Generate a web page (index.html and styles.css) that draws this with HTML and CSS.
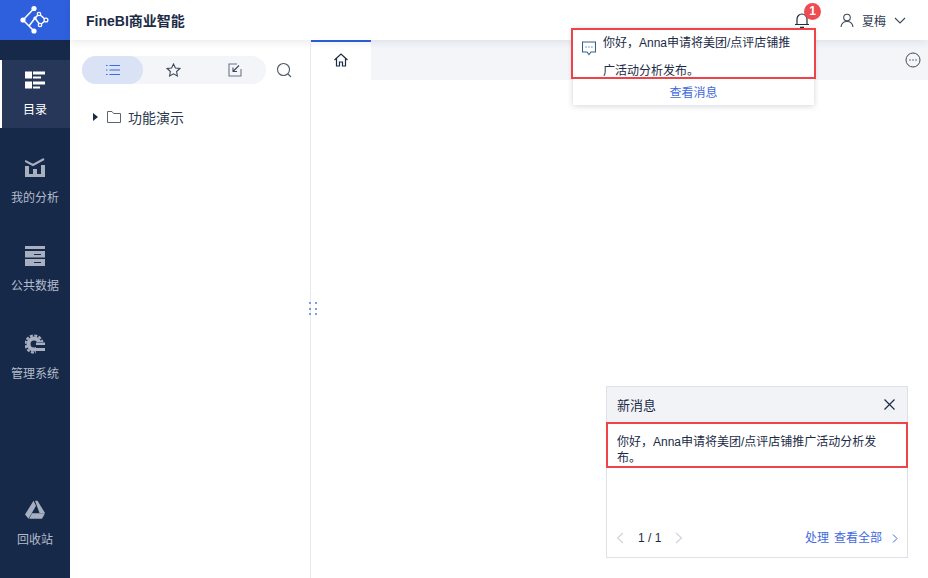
FILE: index.html
```html
<!DOCTYPE html>
<html lang="zh-CN">

<head>
    <meta charset="UTF-8">
    <title>FineBI商业智能</title>
    <link rel="stylesheet" href="styles.css">
</head>

<body>
    <div class="app">
        <!-- 左侧导航 -->
        <aside class="sidebar">
            <div class="logo">
                <svg width="30" height="30" viewBox="0 0 30 30" fill="none" stroke="#fff" stroke-width="1.500">
                    <path d="M14 3.500L3 15L14 26M9 21L15 13L20 20L26 15L19 9L15 13"/>
                    <g fill="#fff" stroke="none">
                        <circle cx="14" cy="3.500" r="2.600"/>
                        <circle cx="3" cy="15" r="2.600"/>
                        <circle cx="14" cy="26" r="2.600"/>
                        <circle cx="15" cy="13" r="1.600"/>
                    </g>
                    <g fill="#2e60de" stroke-width="1.300">
                        <circle cx="26" cy="15" r="1.900"/>
                        <circle cx="19" cy="9" r="1.700"/>
                        <circle cx="20" cy="20" r="1.700"/>
                    </g>
                </svg>
            </div>
            <nav class="nav">
                <a class="nav-item active">
                    <svg width="20" height="20" viewBox="0 0 20 20" fill="#fff">
                        <path d="M0 1.500h7v7H0zM8 1.500h12v3H8zM8 6.500h8v2H8zM0 11.500h7v7H0zM8 11.500h12v3H8zM8 16.500h7v2H8z"/>
                    </svg>
                    <span>目录</span>
                </a>
                <a class="nav-item">
                    <svg width="20" height="20" viewBox="0 0 20 20" fill="#a7afc0">
                        <path d="M0 16h20v3H0zM0 8h4v8H0zM8 11h4v5H8zM16 7h4v9h-4z"/>
                        <path d="M0 3l8 4 11-6" fill="none" stroke="#a7afc0" stroke-width="2"/>
                    </svg>
                    <span>我的分析</span>
                </a>
                <a class="nav-item">
                    <svg width="20" height="20" viewBox="0 0 20 20" fill="#a7afc0">
                        <path d="M0 0h20v3H0zM0 5h20v6.500H0zM0 13h20v7H0z"/>
                        <path d="M9 8h7v1H9zM9 16h7v1H9z" fill="#162949"/>
                    </svg>
                    <span>公共数据</span>
                </a>
                <a class="nav-item">
                    <svg width="20" height="20" viewBox="0 0 20 20" fill="none">
                        <circle cx="9" cy="10" r="5.500" stroke="#a7afc0" stroke-width="4"/>
                        <circle cx="9" cy="10" r="8.500" stroke="#a7afc0" stroke-width="2.200" stroke-dasharray="3 1.450"/>
                        <path d="M11 8h9v12h-9z" fill="#162949"/>
                        <path d="M11 8.500h9v2.500h-9zM11 14h9v3h-9z" fill="#a7afc0"/>
                    </svg>
                    <span>管理系统</span>
                </a>
            </nav>
            <a class="nav-item recycle">
                <svg width="20" height="20" viewBox="0 0 20 20" fill="#a7afc0">
                    <path d="M8.500 .800L0 14.500 3.500 18.800 11 5.800zM10 .800h2.500L20 13h-5.500zM7 13.300h13l-3 5.500H4.200z"/>
                </svg>
                <span>回收站</span>
            </a>
        </aside>

        <div class="main">
            <header class="topbar">
                <h1 class="brand">FineBI商业智能</h1>
                <div class="top-right">
                    <div class="bell">
                        <svg width="14" height="15" viewBox="0 0 14 15" fill="none" stroke="#1f2d3d" stroke-width="1.200">
                            <path d="M0 11.500h14M2 11.500V6a5 5 0 0 1 10 0v5.500M5 14.400h4"/>
                        </svg>
                        <span class="badge">1</span>
                    </div>
                    <div class="user">
                        <svg width="14" height="15" viewBox="0 0 14 15" fill="none" stroke="#3d4a5c" stroke-width="1.100">
                            <circle cx="7" cy="4.500" r="3.300"/>
                            <path d="M1 14c.5-3.500 3-5.500 6-5.500s5.500 2 6 5.500"/>
                        </svg>
                        <span>夏梅</span>
                        <svg width="12" height="7" viewBox="0 0 12 7" fill="none" stroke="#3d4a5c" stroke-width="1.100">
                            <path d="M1 1l5 5 5-5"/>
                        </svg>
                    </div>
                </div>
            </header>

            <div class="content">
                <section class="catalog">
                    <div class="catalog-tools">
                        <div class="tabs">
                            <button class="tab on">
                                <svg width="14" height="12" viewBox="0 0 14 12" fill="none" stroke="#3f69dc" stroke-width="1">
                                    <path d="M3.500 1.500H14M3.500 6H14M3.500 10.500H14M0 1.500h1.500M0 6h1.500M0 10.500h1.500"/>
                                </svg>
                            </button>
                            <button class="tab">
                                <svg width="15" height="14" viewBox="0 0 15 14" fill="none" stroke="#3d4a5c" stroke-width="1.100">
                                    <path d="M7.500 1l1.900 4 4.400.5-3.200 3 .8 4.400-3.900-2.100-3.900 2.100.8-4.400-3.200-3L5.600 5z"/>
                                </svg>
                            </button>
                            <button class="tab">
                                <svg width="14" height="14" viewBox="0 0 14 14" fill="none" stroke="#6b7687" stroke-width="1.100">
                                    <path d="M13 6v7H1V1h8"/>
                                    <path d="M11 2.500L5.500 8M5 4.500V8.500h4" stroke="#3d4a5c"/>
                                </svg>
                            </button>
                        </div>
                        <svg class="search" width="16" height="16" viewBox="0 0 16 16" fill="none" stroke="#4a5768" stroke-width="1.100">
                            <circle cx="7.500" cy="7.500" r="6"/>
                            <path d="M12 12l3 3"/>
                        </svg>
                    </div>
                    <div class="tree-row">
                        <i class="arrow"></i>
                        <svg width="14" height="12" viewBox="0 0 14 12" fill="none" stroke="#5a6576" stroke-width="1">
                            <path d="M.500 11.500V.500h4.500l1.500 2h7v9z"/>
                        </svg>
                        <span>功能演示</span>
                    </div>
                    <div class="drag"><i></i><i></i><i></i></div>
                </section>

                <section class="board">
                    <div class="tabbar">
                        <div class="home-tab">
                            <svg width="14" height="14" viewBox="0 0 14 14" fill="none" stroke="#1c2b45" stroke-width="1.200">
                                <path d="M.500 7L7 1l6.500 6M2.500 5.500V13h3V9h3v4h3V5.500"/>
                            </svg>
                        </div>
                        <svg class="more" width="16" height="16" viewBox="0 0 16 16" fill="none" stroke="#3d4a5c">
                            <circle cx="8" cy="8" r="7"/>
                            <path d="M4.500 8h1M7.500 8h1M10.500 8h1" stroke-width="1.400"/>
                        </svg>
                    </div>
                </section>
            </div>
        </div>
    </div>

    <!-- 消息下拉 -->
    <div class="drop">
        <div class="drop-msg">
            <svg width="14" height="15" viewBox="0 0 14 15" fill="none" stroke="#35618a" stroke-width="1.100">
                <path d="M.500 1h13v10H9l-2 2.500L5 11H.500z"/>
                <path d="M3.500 6h1.200M6.400 6h1.200M9.300 6h1.200"/>
            </svg>
            <p>你好，Anna申请将美团/点评店铺推广活动分析发布。</p>
        </div>
        <a class="drop-link">查看消息</a>
    </div>

    <!-- 新消息弹窗 -->
    <div class="popup">
        <div class="popup-head">
            <span>新消息</span>
            <svg width="11" height="11" viewBox="0 0 11 11" fill="none" stroke="#1c2b45" stroke-width="1.200">
                <path d="M.500.500l10 10M10.500.500l-10 10"/>
            </svg>
        </div>
        <p class="popup-msg">你好，Anna申请将美团/点评店铺推广活动分析发布。</p>
        <div class="popup-foot">
            <div class="pager">
                <svg width="8" height="12" viewBox="0 0 8 12" fill="none" stroke="#cfd4dc" stroke-width="1.200"><path d="M7 1L1.500 6 7 11"/></svg>
                <span>1 / 1</span>
                <svg width="8" height="12" viewBox="0 0 8 12" fill="none" stroke="#cfd4dc" stroke-width="1.200"><path d="M1 1l5.500 5L1 11"/></svg>
            </div>
            <div class="actions">
                <a>处理</a>
                <a>查看全部</a>
                <svg width="6" height="9" viewBox="0 0 6 9" fill="none" stroke="#3f69dc"><path d="M1 .500l4 4-4 4"/></svg>
            </div>
        </div>
    </div>
</body>

</html>
```

FILE: styles.css
```css
html,
body {
    margin: 0;
    height: 100%;
    overflow: hidden;
}

body {
    font-family: "Liberation Sans", "Noto Sans CJK SC", sans-serif;
    font-size: 12px;
    color: #1c2b45;
    background: #fff;
}

p,
h1 {
    margin: 0;
}

button {
    border: none;
    padding: 0;
    background: none;
}

.app {
    display: flex;
    height: 578px;
}

/* 左侧导航 */
.sidebar {
    width: 70px;
    flex: none;
    display: flex;
    flex-direction: column;
    background: #162949;
}

.logo {
    height: 40px;
    display: flex;
    align-items: center;
    justify-content: center;
    background: #2e60de;
}

.nav {
    flex: 1;
    padding-top: 20px;
    display: flex;
    flex-direction: column;
    gap: 20px;
}

.nav-item {
    height: 68px;
    box-sizing: border-box;
    display: flex;
    flex-direction: column;
    align-items: center;
    padding-top: 10px;
    gap: 11px;
    color: #b4bccb;
    line-height: 18px;
}

.nav-item.active {
    color: #fff;
    background: #27375a;
    box-shadow: inset 2px 0 0 #fff;
}

.recycle {
    margin-bottom: 20px;
}

.main {
    flex: 1;
    display: flex;
    flex-direction: column;
    min-width: 0;
}

/* 顶部 */
.topbar {
    height: 40px;
    flex: none;
    display: flex;
    align-items: center;
    justify-content: space-between;
    padding: 0 22px 0 16px;
    background: #fff;
    box-shadow: 0 2px 8px rgba(28, 43, 69, 0.1);
    position: relative;
}

.brand {
    font-size: 14px;
    font-weight: 700;
    color: #1c2b45;
}

.top-right {
    display: flex;
    align-items: center;
    gap: 31px;
}

.bell {
    position: relative;
    display: flex;
}

.badge {
    position: absolute;
    top: -10px;
    left: 9px;
    width: 17px;
    height: 17px;
    border-radius: 50%;
    background: #ee4c50;
    color: #fff;
    font-size: 12px;
    font-weight: 700;
    line-height: 17px;
    text-align: center;
}

.user {
    display: flex;
    align-items: center;
    gap: 8px;
    color: #2b3950;
}

.content {
    flex: 1;
    display: flex;
    min-height: 0;
}

.catalog {
    width: 241px;
    flex: none;
    box-sizing: border-box;
    border-right: 1px solid #e8eaef;
    position: relative;
}

.catalog-tools {
    display: flex;
    align-items: center;
    gap: 10px;
    padding: 16px 0 0 12px;
}

.tabs {
    display: flex;
    width: 184px;
    height: 28px;
    border-radius: 14px;
    background: #f4f5f9;
}

.tab {
    width: 61px;
    display: flex;
    align-items: center;
    justify-content: center;
    border-radius: 14px;
}

.tab.on {
    background: #dae2f5;
}

.tree-row {
    display: flex;
    align-items: center;
    height: 20px;
    margin-top: 23px;
    padding-left: 23px;
    font-size: 14px;
    color: #2b3950;
}

.arrow {
    width: 0;
    height: 0;
    border-left: 5px solid #1c2b45;
    border-top: 4px solid transparent;
    border-bottom: 4px solid transparent;
    margin-right: 9px;
}

.tree-row span {
    margin-left: 7px;
}

/* 拖动手柄 */
.drag {
    position: absolute;
    top: 262px;
    right: -7px;
    width: 8px;
    height: 13px;
    display: flex;
    flex-direction: column;
    justify-content: space-between;
}

.drag i {
    height: 2px;
    background: linear-gradient(90deg, #7f9be6 2px, transparent 2px, transparent 6px, #7f9be6 6px);
}

.board {
    flex: 1;
    min-width: 0;
}

.tabbar {
    height: 40px;
    display: flex;
    align-items: center;
    justify-content: space-between;
    padding-right: 7px;
    background: #f4f5f9;
}

.home-tab {
    width: 60px;
    height: 40px;
    box-sizing: border-box;
    display: flex;
    align-items: center;
    justify-content: center;
    padding-bottom: 2px;
    background: #fff;
    border-top: 2px solid #2e60de;
}

/* 消息下拉 */
.drop {
    position: absolute;
    top: 28px;
    left: 573px;
    width: 241px;
    background: #fff;
    box-shadow: 0 1px 6px rgba(28, 43, 69, 0.2);
}

.drop-msg {
    display: flex;
    gap: 7px;
    height: 51px;
    box-sizing: border-box;
    margin: 0 -2px;
    padding: 1px 14px 0 11px;
    outline: 2px solid #f04347;
    outline-offset: -2px;
    line-height: 28px;
}

.drop-msg svg {
    flex: none;
    margin-top: 12px;
}

.drop-link {
    display: block;
    height: 26px;
    line-height: 28px;
    text-align: center;
    color: #3f69dc;
}

/* 新消息弹窗 */
.popup {
    position: absolute;
    left: 606px;
    top: 386px;
    width: 302px;
    height: 172px;
    box-sizing: border-box;
    border: 1px solid #dfe1e8;
    display: flex;
    flex-direction: column;
    background: #fff;
}

.popup-head {
    height: 35px;
    flex: none;
    display: flex;
    align-items: center;
    justify-content: space-between;
    padding: 0 12px 0 10px;
    font-size: 13px;
    background: #f2f3f7;
}

.popup-msg {
    height: 46px;
    flex: none;
    box-sizing: border-box;
    margin: 0 -1px;
    padding: 10px 20px 0 9px;
    line-height: 16px;
    border: 2px solid #f04347;
}

.popup-foot {
    flex: 1;
    display: flex;
    align-items: flex-end;
    justify-content: space-between;
    padding: 0 9px 10px 9px;
}

.pager {
    display: flex;
    align-items: center;
    gap: 14px;
    line-height: 18px;
}

.actions {
    display: flex;
    align-items: center;
    gap: 5px;
    line-height: 18px;
    color: #3f69dc;
}

.actions svg {
    margin-left: 5px;
}
```
